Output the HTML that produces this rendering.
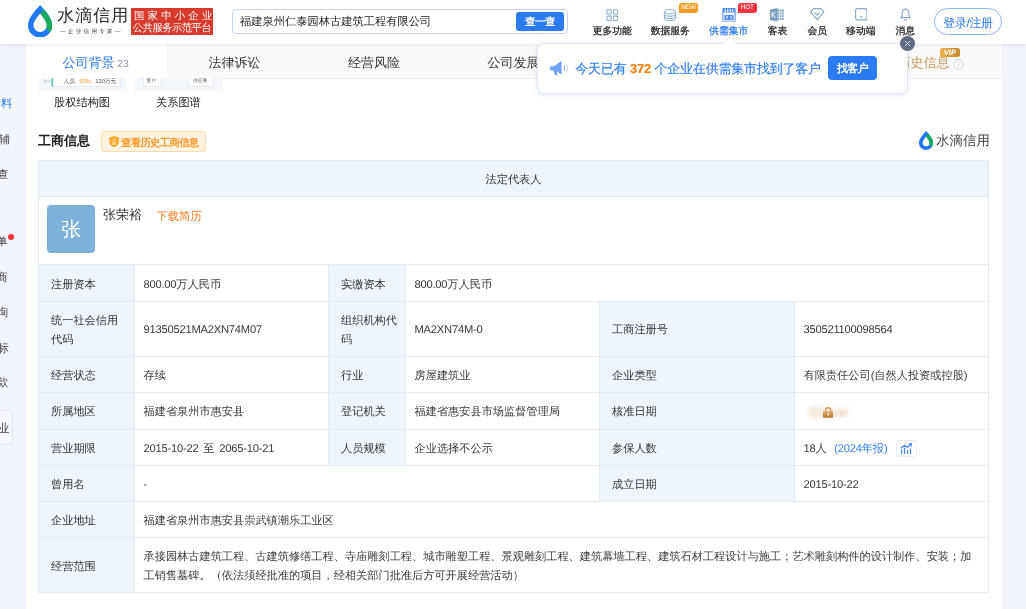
<!DOCTYPE html>
<html lang="zh">
<head>
<meta charset="utf-8">
<title>水滴信用</title>
<style>
*{box-sizing:border-box;margin:0;padding:0}
html,body{width:1026px;height:609px;overflow:hidden}
body{text-rendering:geometricPrecision;font-family:"Liberation Sans",sans-serif;font-size:11.3px;color:#333;background:#f2f5fd;position:relative}
body>*{will-change:transform}
#main{position:absolute;left:26px;top:0;width:976px;height:609px;background:#fff}
/* header */
#hdr{position:absolute;left:0;top:0;width:1026px;height:44px;background:#fff;box-shadow:0 1px 4px rgba(0,0,0,.085);z-index:5}
#drop{position:absolute;left:27.8px;top:4.8px}
#logo-t{position:absolute;left:57.3px;top:3.6px;font-size:17px;letter-spacing:1px;line-height:24px;color:#2a2a2a;white-space:nowrap}
#logo-s{position:absolute;left:60px;top:28.6px;width:140px;font-size:11px;line-height:10px;color:#444;white-space:nowrap;transform:scale(.5);transform-origin:0 0;letter-spacing:4.7px}
#badge{position:absolute;left:131px;top:8px;width:82px;height:27px;background:#d83b2d;color:#fff;font-size:10.4px;line-height:12.5px;text-align:center;padding-top:2.6px;white-space:nowrap;overflow:hidden;font-weight:500}
#badge div:first-child{letter-spacing:3.2px;padding-left:3px}
#badge div:last-child{letter-spacing:-.6px}
#search{position:absolute;left:232px;top:9px;width:336px;height:25px;border:1px solid #c5d5ee;border-radius:4px;background:#fff}
#search span{position:absolute;left:7px;top:1px;line-height:23px;font-size:11.25px;color:#222;white-space:nowrap}
#sbtn{position:absolute;left:516px;top:12px;width:48px;height:19px;border-radius:3px;background:#2b7bf5;color:#fff;font-size:10.4px;font-weight:bold;line-height:21.400px;text-align:center;letter-spacing:-.5px}
.nav{position:absolute;top:25.8px;font-size:9.8px;line-height:12px;color:#222;-webkit-text-stroke:.25px currentColor;white-space:nowrap;transform:translateX(-50%)}
.nico{position:absolute}
.tag{position:absolute;top:3px;width:19px;height:10px;border-radius:3px 2px 3px 0;color:#fff;font-size:6.5px;line-height:10px;text-align:center;letter-spacing:-.2px}
#login{position:absolute;left:934px;top:8px;width:68px;height:27px;border:1px solid #8fb6f7;border-radius:14px;color:#2b7bf5;font-size:12px;line-height:28px;text-align:center;white-space:nowrap;letter-spacing:-.4px}
/* tabs */
#tabs{position:absolute;left:26px;top:44px;width:976px;height:35px;background:#fafafb;border-bottom:1px solid #efeff2}
#tabs .act{position:absolute;left:0;top:0;width:140px;height:35px;background:#fff}
.tab{position:absolute;top:10.3px;font-size:13px;line-height:18px;color:#333;white-space:nowrap}
/* popup */
#pop{position:absolute;left:536.8px;top:42.8px;width:371.2px;height:50.5px;background:#fff;border:1px solid #e1e9f8;border-radius:7px;box-shadow:0 1px 5px rgba(70,110,180,.16);z-index:6}
#pop .t{-webkit-text-stroke:.15px currentColor;position:absolute;left:37.3px;top:15.8px;font-size:13px;letter-spacing:-.2px;line-height:18px;color:#2b7bf5;white-space:nowrap}
#pop .t b{color:#ff7f0e}
#pop .b{position:absolute;left:290.3px;top:12.2px;width:48.5px;height:24px;border-radius:4px;background:#2b7bf5;color:#fff;font-size:11px;font-weight:bold;line-height:26px;text-align:center;letter-spacing:-.6px}
#arrow{position:absolute;left:723px;top:35.9px;z-index:7}
#close{position:absolute;left:899.8px;top:35.7px;width:15px;height:15px;border-radius:50%;background:#616c82;z-index:8}
/* left strip */
.ls{position:absolute;left:-20px;width:32px;font-size:11.3px;line-height:14px;color:#444;overflow:hidden;white-space:nowrap;text-align:right}
#lsbox{position:absolute;left:-2px;top:410px;width:15px;height:35px;border:1px solid #dfe6f2;border-radius:4px;background:#f5f7fd}
#dot{position:absolute;left:8px;top:234px;width:6px;height:6px;border-radius:50%;background:#f5333f}
/* content */
.th{position:absolute;top:78px;height:12.5px;width:88px;background:#f4f8fd;overflow:hidden}
.th i{position:absolute;top:0;height:8.5px;background:#fff;border:1px solid #e6ecf5;border-top:0;font-style:normal;font-size:8px;line-height:8px;color:#555;white-space:nowrap;overflow:hidden}
.th i span{display:block;transform:scale(.6);transform-origin:0 0;padding-left:4px}
.cap{position:absolute;top:95.9px;font-size:11.2px;line-height:14px;color:#222;white-space:nowrap}
#sec{position:absolute;left:38.3px;top:131.8px;font-size:13px;line-height:18px;font-weight:bold;color:#222;white-space:nowrap}
#hist{position:absolute;left:101px;top:131px;width:105px;height:21px;background:#fff4e2;border:1px solid #ffddb0;border-radius:3px;color:#ff9a2e;font-size:10.4px;line-height:19px;white-space:nowrap}
#hist span{position:absolute;left:19px;top:1.5px;font-weight:bold;letter-spacing:-.7px}
#hist svg{position:absolute;left:6.7px;top:4.1px}
#wmd{position:absolute;left:919px;top:131px}
#wm{position:absolute;left:936.3px;top:131.9px;font-size:13.4px;letter-spacing:.15px;line-height:18px;color:#444;white-space:nowrap}
/* table */
#tb{position:absolute;left:38px;top:160px;width:951px;height:433px;border:1px solid #e2ebf6;background:#fff}
.c{position:absolute;border-right:1px solid #e2ebf6;border-bottom:1px solid #e2ebf6;font-size:11.2px;line-height:18.7px;color:#333;display:flex;align-items:center;padding-left:12px;padding-top:4px;white-space:nowrap}
.in{position:relative}
.fx{display:flex;align-items:center;position:relative}
.l{background:#eef5fc;color:#333}
.v{padding-left:8.5px;color:#3a3a3a}
.lnk{color:#3d82f5;margin-left:7.5px}
.n{letter-spacing:-.23px}
.chart{display:inline-block;width:21.3px;height:17px;border:1px solid #e6edf8;border-radius:3px;margin-left:8px;position:relative;top:-.7px}
.chart svg{position:absolute;left:3.5px;top:2px}
.lk{position:relative;width:60px;height:14px}
.lock{position:absolute;left:19.3px;top:2px}
.lockblur{position:absolute;left:5px;top:2.3px;width:41px;height:11px;background:linear-gradient(90deg,#f8e8da 0,#f9ece1 40%,#fcf4ed 100%);filter:blur(2px);border-radius:4px}
.lockvip{position:absolute;left:29.8px;top:3.5px;font-size:9px;line-height:10px;font-style:italic;color:#efd9c6;letter-spacing:-.3px}
.scope{line-height:19px;white-space:nowrap}
#ava{position:absolute;left:8px;top:44px;width:48px;height:48px;border-radius:4px;background:#7db1da;color:#fff;font-size:20px;line-height:50px;text-align:center}
#nm{position:absolute;left:64px;top:45px;font-size:13px;line-height:18px;color:#333;white-space:nowrap}
#dl{position:absolute;left:117.5px;top:46.8px;font-size:11.3px;line-height:18px;color:#ff7a1a;white-space:nowrap}
</style>
</head>
<body>
<div id="main"></div>
<div id="hdr">
<svg id="drop" width="24.3" height="32.5" viewBox="0 0 24.3 32.5">
<defs><clipPath id="gclip"><path d="M12.15 8.5L17.2 2.2 27 2 27 31 22.6 27.9 18.2 23.4 12.15 20Z"/></clipPath></defs>
<path id="ring" fill-rule="evenodd" fill="#217af5" d="M12.15 0C8.3 4.6 0 12.6 0 20.4A12.15 12.1 0 0 0 24.3 20.4C24.3 12.6 16 4.6 12.15 0ZM12.15 8.6C9.8 11.8 5.5 16.3 5.5 20.4A6.65 6.6 0 0 0 18.8 20.4C18.8 16.3 14.5 11.8 12.15 8.6Z"/>
<path clip-path="url(#gclip)" fill-rule="evenodd" fill="#1bab5f" d="M12.15 0C8.3 4.6 0 12.6 0 20.4A12.15 12.1 0 0 0 24.3 20.4C24.3 12.6 16 4.6 12.15 0ZM12.15 8.6C9.8 11.8 5.5 16.3 5.5 20.4A6.65 6.6 0 0 0 18.8 20.4C18.8 16.3 14.5 11.8 12.15 8.6Z"/>
</svg>
<div id="logo-t">水滴信用</div>
<div id="logo-s">—企业信用专家—</div>
<div id="badge"><div>国家中小企业</div><div>公共服务示范平台</div></div>
<div id="search"><span>福建泉州仁泰园林古建筑工程有限公司</span></div>
<div id="sbtn">查一查</div>

<svg class="nico" style="left:605.8px;top:8.5px" width="12.6" height="12.2" viewBox="0 0 13 13" fill="none" stroke="#8aa9ca" stroke-width="1.1"><rect x=".7" y=".7" width="4.700" height="4.700" rx="1"/><rect x="7.600" y=".7" width="4.700" height="4.700" rx="1"/><rect x=".7" y="7.600" width="4.700" height="4.700" rx="1"/><rect x="7.600" y="7.600" width="4.700" height="4.700" rx="1"/></svg>
<div class="nav" style="left:612.3px">更多功能</div>

<svg class="nico" style="left:663px;top:8.5px" width="14" height="12.6" viewBox="0 0 14 13" fill="none" stroke="#86a9cf" stroke-width="1"><ellipse cx="7" cy="2.8" rx="5.8" ry="2.2"/><path d="M1.2 2.8v7.2c0 1.2 2.6 2.2 5.8 2.2s5.8-1 5.8-2.2V2.8"/><path d="M1.2 5.4c0 1.2 2.6 2.1 5.8 2.1s5.8-.9 5.8-2.1M1.2 7.8c0 1.2 2.6 2.1 5.8 2.1s5.8-.9 5.8-2.1"/></svg>
<div class="nav" style="left:670.3px">数据服务</div>
<div class="tag" style="left:679px;background:#f59c25">NEW</div>

<svg class="nico" style="left:722px;top:7.8px" width="14" height="14.5" viewBox="0 0 14 14.5"><path d="M1.6 0h10.8a1.2 1.2 0 0 1 1.2 1.2V4.4H.4V1.2A1.2 1.2 0 0 1 1.6 0Z" fill="#4a8af6"/><path d="M3.3 1.2v2.2M5.8 1.2v2.2M8.3 1.2v2.2M10.8 1.2v2.2" stroke="#fff" stroke-width="1.1" stroke-linecap="round"/><path d="M.9 4.4v8.4a1.2 1.2 0 0 0 1.2 1.2h9.8a1.2 1.2 0 0 0 1.2-1.2V4.4" fill="none" stroke="#4a8af6" stroke-width="1"/><rect x="2.5" y="7" width="9" height="5.3" rx=".6" fill="#4a8af6"/><path d="M4 8.6h2.2M4 10h2.2M5.1 8v3.6M7.8 8.6h2.4M7.8 10.2h2.4M9 8v3.6" stroke="#dfeaff" stroke-width=".6"/></svg>
<div class="nav" style="left:728.7px;color:#2b7bf5">供需集市</div>
<div class="tag" style="left:738px;width:18.5px;background:#f5343f">HOT</div>

<svg class="nico" style="left:770.3px;top:8.2px" width="14" height="13.5" viewBox="0 0 14 13.5"><path d="M0 1.6L7.6 0v13.5L0 11.9Z" fill="#7b9dbf"/><rect x="7.2" y="1.5" width="6.5" height="10.5" rx=".6" fill="#86a6c6"/><path d="M9.4 1.8v10M11.6 1.8v10M7.6 4.2h6M7.6 6.8h6M7.6 9.4h6" stroke="#fff" stroke-width=".7"/><path d="M2.2 4v5.6M5.4 4L2.6 6.8 5.6 9.6" stroke="#fff" stroke-width="1" fill="none"/></svg>
<div class="nav" style="left:777.6px">客表</div>

<svg class="nico" style="left:810px;top:8px" width="14.5" height="12.5" viewBox="0 0 14.5 12.5" fill="none" stroke="#8aa9ca" stroke-width="1.15" stroke-linejoin="round"><path d="M3.6.6h7.3l3 3.6-6.65 7.4L.6 4.2Z"/><path d="M4.6 4.6l2.65 2.6 2.65-2.6"/></svg>
<div class="nav" style="left:817.2px">会员</div>

<svg class="nico" style="left:854.6px;top:8.4px" width="12.5" height="12.5" viewBox="0 0 12.5 12.5" fill="none" stroke="#8aa9ca" stroke-width="1.15"><rect x=".6" y=".6" width="11.3" height="11.3" rx="2"/><path d="M4.8 8.8h2.9"/></svg>
<div class="nav" style="left:860.8px">移动端</div>

<svg class="nico" style="left:899.5px;top:8px" width="11" height="13" viewBox="0 0 11 13" fill="none" stroke="#8aa9ca" stroke-width="1.15" stroke-linejoin="round"><path d="M5.5 1.2c2.2 0 3.4 1.7 3.4 3.6v2.6l1.3 2.2H.8l1.3-2.2V4.8c0-1.9 1.2-3.6 3.4-3.6Z"/><path d="M5.5.2v1M4.3 11.3c.3.6.7.9 1.2.9s.9-.3 1.2-.9"/></svg>
<div class="nav" style="left:905.2px">消息</div>

<div id="login">登录/注册</div>
</div>

<div id="tabs">
<div class="act"></div>
<div class="tab" style="left:36.5px;color:#2b7bf5">公司背景 <span style="font-size:10.4px;color:#8b96a8;margin-left:-1px">23</span></div>
<div class="tab" style="left:182.5px">法律诉讼</div>
<div class="tab" style="left:322px">经营风险</div>
<div class="tab" style="left:461.5px">公司发展</div>
<div class="tab" style="left:871.5px;color:#c9975c">历史信息</div>
<svg style="position:absolute;left:927px;top:15px" width="11" height="11" viewBox="0 0 11 11" fill="none" stroke="#d0d3d8" stroke-width=".9"><circle cx="5.5" cy="5.5" r="4.7"/><path d="M5.5 4.8v3M5.5 3v.9"/></svg>
<div style="position:absolute;left:914px;top:4.3px;width:19.7px;height:9px;border-radius:2.5px 2.5px 2.5px 0;background:linear-gradient(90deg,#eab04a,#c88a30);color:#fff;font-size:7.6px;line-height:9px;font-weight:bold;font-style:italic;text-align:center">VIP</div>
</div>

<div id="pop">
<svg style="position:absolute;left:12.3px;top:17px" width="20" height="15" viewBox="0 0 20 15"><path d="M1 5.2h3.2L10.6.6c.5-.3 1-.1 1 .5v11.4c0 .6-.5.8-1 .5L6.6 10.3l.9 3.1c.1.5-.1.8-.6.8H5.5c-.4 0-.7-.2-.8-.6L3.7 9.6H1c-.5 0-.8-.3-.8-.8V6c0-.5.3-.8.8-.8Z" fill="#6fa3f7"/><path d="M13.8 4.6c1 1.4 1 3.8 0 5.2" stroke="#8cb5f8" stroke-width="1.1" fill="none"/><path d="M16.3 3.4c1.5 2.2 1.5 5.4 0 7.6" stroke="#b9d1fb" stroke-width="1" fill="none"/></svg>
<div class="t">今天已有 <b>372</b> 个企业在供需集市找到了客户</div>
<div class="b">找客户</div>
</div>
<svg id="arrow" width="15" height="8" viewBox="0 0 15 8"><path d="M0 8L7.5 .5 15 8Z" fill="#fff"/><path d="M0 7.6L7.5 .5 15 7.6" fill="none" stroke="#e1e9f8" stroke-width="1"/></svg>
<div id="close"><svg width="15" height="15" viewBox="0 0 15 15"><path d="M5.200 5.200l4.600 4.600M9.800 5.200l-4.600 4.600" stroke="#e4e7ec" stroke-width=".95" stroke-linecap="round"/></svg></div>

<div class="ls" style="top:97.0px;color:#2b7bf5;width:32.4px">资料</div>
<div class="ls" style="top:132.5px;width:30.2px">辅</div>
<div class="ls" style="top:168.4px;width:28.6px">查</div>
<div class="ls" style="top:235.0px;width:27.6px">单</div>
<div id="dot"></div>
<div class="ls" style="top:271.0px;width:27.6px">商</div>
<div class="ls" style="top:305.5px;width:28.3px">询</div>
<div class="ls" style="top:341.5px;width:28.9px">标</div>
<div class="ls" style="top:376.0px;width:28.3px">款</div>
<div id="lsbox"></div>
<div class="ls" style="top:422.3px;width:29.3px">业</div>

<div class="th" style="left:38px"><svg style="position:absolute;left:6.4px;top:0" width="10" height="9" viewBox="0 0 10 9"><path d="M.4 1.200v4M.4 3.200h7" stroke="#b8c4d4" stroke-width=".8" fill="none"/><path d="M8.400 0v8.600" stroke="#5ccaa0" stroke-width="1.800"/></svg><i style="left:15px;width:68px"><span style="padding-left:13.200px;padding-top:.8px;transform:scale(.72);word-spacing:3.800px;width:120px">人员 <b style="color:#ff9a2e;font-weight:normal">60%</b> 120万元</span></i></div>
<div class="th" style="left:134px"><i style="left:8.500px;width:19px"><span>客户</span></i><i style="left:53.500px;width:26px"><span style="padding-left:6.500px">供应商</span></i></div>
<div class="cap" style="left:54.3px">股权结构图</div>
<div class="cap" style="left:156px">关系图谱</div>

<div id="sec">工商信息</div>
<div id="hist"><svg width="10.3" height="11.4" viewBox="0 0 11 12"><path d="M5.5 0L10.6 1.6V6c0 2.8-2 4.8-5.1 6C2.4 10.800.4 8.800.4 6V1.600Z" fill="#ffa829"/><path d="M5.500 3L3.200 5.400M5.500 3L7.800 5.400M5.500 5.200V8.800M3.600 8.800h3.800M5.500 7h1.600M4.200 6.800v2" stroke="#fff" stroke-width=".7" fill="none"/></svg><span>查看历史工商信息</span></div>
<svg id="wmd" width="14.2" height="19" viewBox="0 0 24.3 32.5">
<defs><clipPath id="gclip2"><path d="M12.15 9L17.2 2.2 27 2 27 31 22.6 27.9 17.6 23 12.15 20Z"/></clipPath></defs>
<path fill-rule="evenodd" fill="#217af5" d="M12.15 0C8.3 4.6 0 12.6 0 20.4A12.15 12.1 0 0 0 24.3 20.4C24.3 12.6 16 4.6 12.15 0ZM12.15 9.6C10 12.7 6.4 16.7 6.4 20.4A5.75 5.7 0 0 0 17.9 20.4C17.9 16.7 14.3 12.7 12.15 9.6Z"/>
<path clip-path="url(#gclip2)" fill-rule="evenodd" fill="#1bab5f" d="M12.15 0C8.3 4.6 0 12.6 0 20.4A12.15 12.1 0 0 0 24.3 20.4C24.3 12.6 16 4.6 12.15 0ZM12.15 9.6C10 12.7 6.4 16.7 6.4 20.4A5.75 5.7 0 0 0 17.9 20.4C17.9 16.7 14.3 12.7 12.15 9.6Z"/>
</svg>
<div id="wm">水滴信用</div>

<div id="tb">
<div class="c l" style="left:0px;top:0px;width:950px;height:36px;justify-content:center;padding-left:0;"><div class="in">法定代表人</div></div>
<div class="c v" style="left:0px;top:36px;width:950px;height:68px;"><div class="in"></div></div>
<div class="c l" style="left:0px;top:104px;width:96px;height:37px;"><div class="in"><span>注册资本</span></div></div>
<div class="c v" style="left:96px;top:104px;width:194px;height:37px;"><div class="in"><span class="n">800.00</span>万人民币</div></div>
<div class="c l" style="left:290px;top:104px;width:77px;height:37px;"><div class="in"><span>实缴资本</span></div></div>
<div class="c v" style="left:367px;top:104px;width:583px;height:37px;"><div class="in"><span class="n">800.00</span>万人民币</div></div>
<div class="c l" style="left:0px;top:141px;width:96px;height:55px;"><div class="in"><span>统一社会信用<br>代码</span></div></div>
<div class="c v" style="left:96px;top:141px;width:194px;height:55px;padding-top:2.6px;"><div class="in"><span class="n">91350521MA2XN74M07</span></div></div>
<div class="c l" style="left:290px;top:141px;width:77px;height:55px;"><div class="in"><span>组织机构代<br>码</span></div></div>
<div class="c v" style="left:367px;top:141px;width:194px;height:55px;padding-top:2.6px;"><div class="in"><span class="n">MA2XN74M-0</span></div></div>
<div class="c l" style="left:561px;top:141px;width:195px;height:55px;padding-top:2.6px;"><div class="in"><span>工商注册号</span></div></div>
<div class="c v" style="left:756px;top:141px;width:194px;height:55px;padding-top:2.6px;"><div class="in"><span class="n">350521100098564</span></div></div>
<div class="c l" style="left:0px;top:196px;width:96px;height:36px;"><div class="in"><span>经营状态</span></div></div>
<div class="c v" style="left:96px;top:196px;width:194px;height:36px;"><div class="in">存续</div></div>
<div class="c l" style="left:290px;top:196px;width:77px;height:36px;"><div class="in"><span>行业</span></div></div>
<div class="c v" style="left:367px;top:196px;width:194px;height:36px;"><div class="in">房屋建筑业</div></div>
<div class="c l" style="left:561px;top:196px;width:195px;height:36px;"><div class="in"><span>企业类型</span></div></div>
<div class="c v" style="left:756px;top:196px;width:194px;height:36px;"><div class="in">有限责任公司(自然人投资或控股)</div></div>
<div class="c l" style="left:0px;top:232px;width:96px;height:37px;padding-top:2px;"><div class="in"><span>所属地区</span></div></div>
<div class="c v" style="left:96px;top:232px;width:194px;height:37px;padding-top:2px;"><div class="in">福建省泉州市惠安县</div></div>
<div class="c l" style="left:290px;top:232px;width:77px;height:37px;padding-top:2px;"><div class="in"><span>登记机关</span></div></div>
<div class="c v" style="left:367px;top:232px;width:194px;height:37px;padding-top:2px;"><div class="in">福建省惠安县市场监督管理局</div></div>
<div class="c l" style="left:561px;top:232px;width:195px;height:37px;padding-top:2px;"><div class="in"><span>核准日期</span></div></div>
<div class="c v" style="left:756px;top:232px;width:194px;height:37px;padding-top:2px;"><div class="in"><div class="lk"><span class="lockblur"></span><svg class="lock" width="10.4" height="10.8" viewBox="0 0 10.4 10.8"><defs><linearGradient id="lg" x1="0" y1="0" x2="0" y2="1"><stop offset="0" stop-color="#dcaa6c"/><stop offset="1" stop-color="#b87731"/></linearGradient></defs><rect x="0" y="4.2" width="10.4" height="6.6" rx="1.3" fill="url(#lg)"/><path d="M2.6 4.6V3.4a2.6 2.6 0 0 1 5.200 0v1.200" fill="none" stroke="#d6a162" stroke-width="1.500"/><path d="M4.400 6.200h1.600l-.500 2.600h-.600Z" fill="#fff"/></svg><span class="lockvip">VIP</span></div></div></div>
<div class="c l" style="left:0px;top:269px;width:96px;height:36px;"><div class="in"><span>营业期限</span></div></div>
<div class="c v" style="left:96px;top:269px;width:194px;height:36px;"><div class="in"><span class="n">2015-10-22</span><span style="margin:0 1.7px"> 至 </span><span class="n">2065-10-21</span></div></div>
<div class="c l" style="left:290px;top:269px;width:77px;height:36px;"><div class="in"><span>人员规模</span></div></div>
<div class="c v" style="left:367px;top:269px;width:194px;height:36px;"><div class="in">企业选择不公示</div></div>
<div class="c l" style="left:561px;top:269px;width:195px;height:36px;"><div class="in"><span>参保人数</span></div></div>
<div class="c v" style="left:756px;top:269px;width:194px;height:36px;"><div class="in"><div class="fx"><span class="n">18</span>人<span class="lnk"><span class="n">(2024</span>年报<span class="n">)</span></span><span class="chart"><svg width="13" height="12" viewBox="0 0 13 12"><path d="M1.5 11V6.5M4.5 11V5M7.5 11V7M10.5 11V5.5" stroke="#4a8af5" stroke-width="1.3" fill="none"/><path d="M1 5.2L4.6 2.2 7.4 4.4 11 1" stroke="#4a8af5" stroke-width="1.2" fill="none"/><path d="M8.8 0.8h2.6v2.6" stroke="#4a8af5" stroke-width="1.2" fill="none"/></svg></span></div></div></div>
<div class="c l" style="left:0px;top:305px;width:96px;height:36px;"><div class="in"><span>曾用名</span></div></div>
<div class="c v" style="left:96px;top:305px;width:465px;height:36px;"><div class="in">-</div></div>
<div class="c l" style="left:561px;top:305px;width:195px;height:36px;"><div class="in"><span>成立日期</span></div></div>
<div class="c v" style="left:756px;top:305px;width:194px;height:36px;"><div class="in"><span class="n">2015-10-22</span></div></div>
<div class="c l" style="left:0px;top:341px;width:96px;height:36px;"><div class="in"><span>企业地址</span></div></div>
<div class="c v" style="left:96px;top:341px;width:854px;height:36px;"><div class="in">福建省泉州市惠安县崇武镇潮乐工业区</div></div>
<div class="c l" style="left:0px;top:377px;width:96px;height:55px;"><div class="in"><span>经营范围</span></div></div>
<div class="c v" style="left:96px;top:377px;width:854px;height:55px;"><div class="in"><div class="scope">承接园林古建筑工程、古建筑修缮工程、寺庙雕刻工程、城市雕塑工程、景观雕刻工程、建筑幕墙工程、建筑石材工程设计与施工；艺术雕刻构件的设计制作、安装；加<br>工销售墓碑。（依法须经批准的项目，经相关部门批准后方可开展经营活动）</div></div></div>
<div id="ava">张</div>
<div id="nm">张荣裕</div>
<div id="dl">下载简历</div>
</div>
</body>
</html>
